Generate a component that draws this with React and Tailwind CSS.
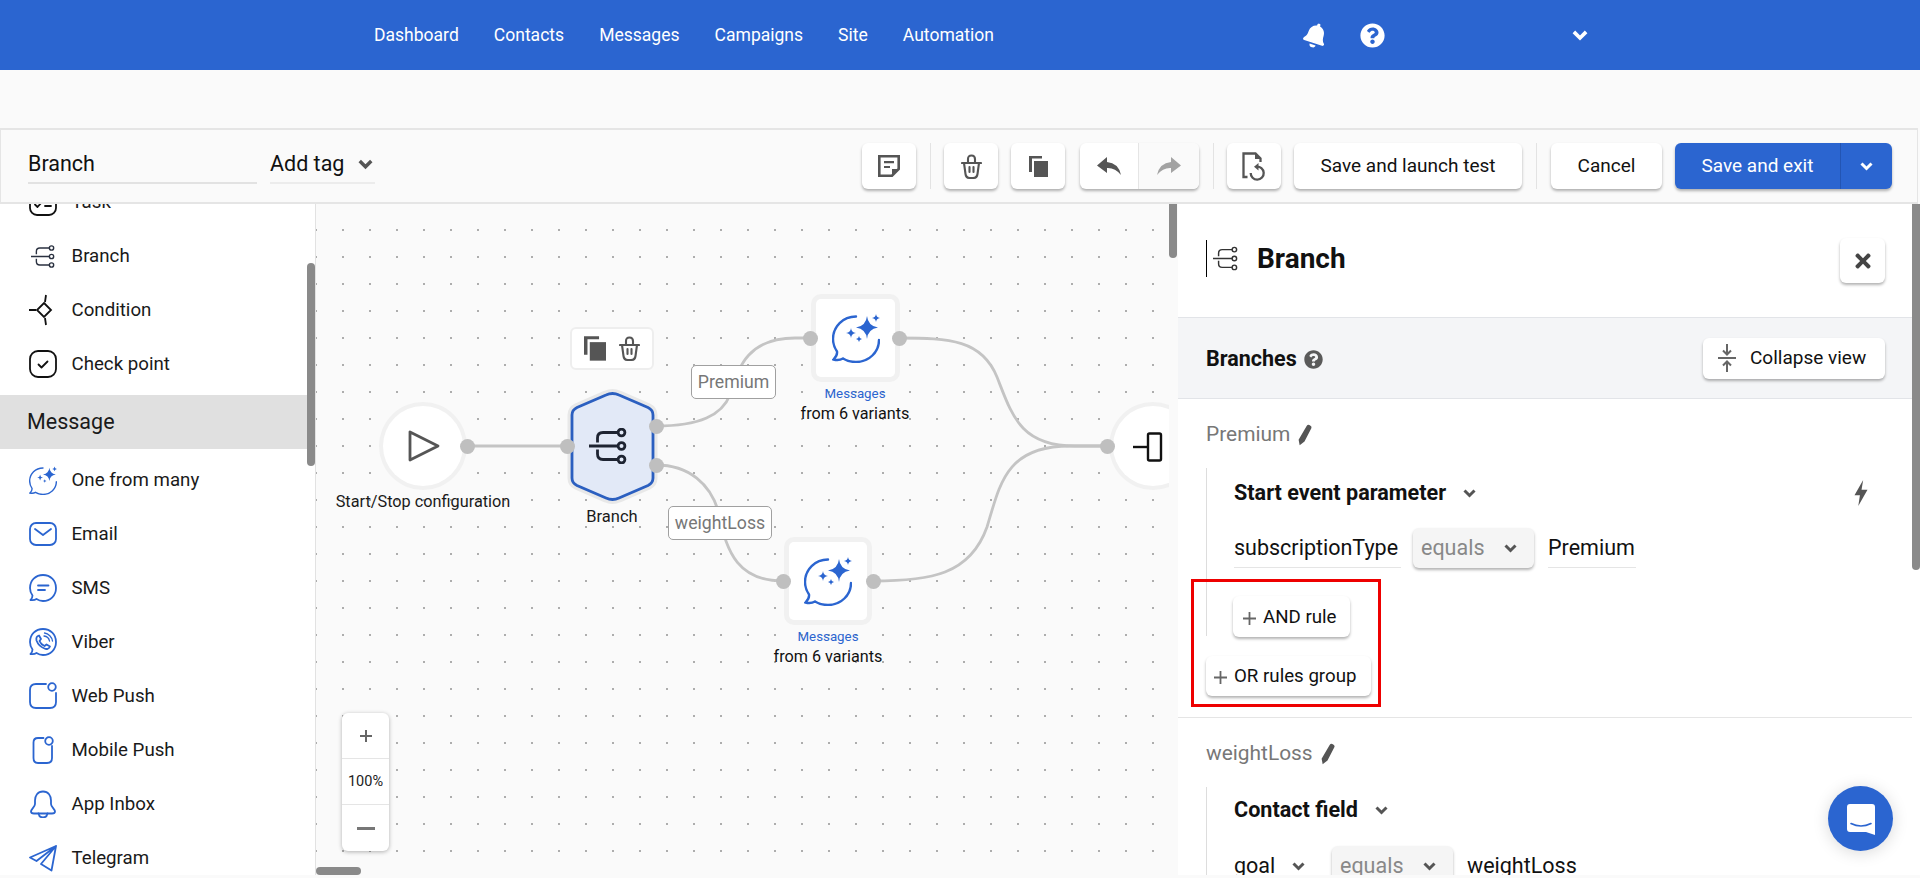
import { FaBell, FaQuestionCircle, FaTimes } from 'react-icons/fa'

const navItems = ['Dashboard', 'Contacts', 'Messages', 'Campaigns', 'Site', 'Automation']

const Chevron = ({ className = 'w-[13px] h-[9px] text-[#555]' }) => (
  <svg viewBox="0 0 13 9" className={className} fill="none" stroke="currentColor" strokeWidth="3">
    <path d="M1.5 1.5 6.5 6.5 11.5 1.5" />
  </svg>
)

const Plus = () => (
  <svg viewBox="0 0 13 13" className="w-[13px] h-[13px] mt-[2px]" fill="none" stroke="#666" strokeWidth="1.800">
    <path d="M6.500 0V13M0 6.500H13" />
  </svg>
)

const BranchGlyph = ({ className, color = '#2a3140', width = 2.2 }) => (
  <svg viewBox="0 0 38 36" className={className} fill="none" stroke={color} strokeWidth={width}>
    <circle cx="32.5" cy="4.5" r="3.4" />
    <circle cx="32.5" cy="18" r="3.4" />
    <circle cx="32.5" cy="31.5" r="3.4" />
    <path d="M0 18H29M29 4.5H14Q8.5 4.5 8.5 10V14.5M8.5 21.5V26Q8.5 31.5 14 31.5H29" />
  </svg>
)

const SparkBubble = ({ className }) => (
  <svg viewBox="0 0 48 50" className={className} fill="none" stroke="#2b65d0" strokeWidth="2.4" strokeLinecap="round">
    <path d="M24 3.5C11 3.5 1 13.5 1 26C1 31 2.5 35 5 38.5C5.5 41.5 4 44 1.5 46.5C5 47.5 8.5 47 11 45.5C15 48 19.500 49 24 49C37 49 47 39 47 27" />
    <g fill="#2b65d0" stroke="none">
      <path d="M35 3Q36 13 46 14.500Q36 16 35 26Q34 16 24 14.500Q34 13 35 3Z" />
      <path d="M44 1Q44.400 4.600 48 5Q44.400 5.400 44 9Q43.600 5.400 40 5Q43.600 4.600 44 1Z" />
      <path d="M19 15Q19.400 19.600 24 20Q19.400 20.400 19 25Q18.600 20.400 14 20Q18.600 19.600 19 15Z" />
      <path d="M27 23Q27.300 25.700 30 26Q27.300 26.300 27 29Q26.700 26.300 24 26Q26.700 25.700 27 23Z" />
    </g>
  </svg>
)

const Outline = ({ children, color = '#2b65d0' }) => (
  <svg viewBox="0 0 28 28" className="w-[28px] h-[28px]" fill="none" stroke={color} strokeWidth="1.8" strokeLinecap="round" strokeLinejoin="round">
    {children}
  </svg>
)

const sideIcons = {
  task: (
    <Outline color="#111">
      <rect x="1" y="1" width="26" height="26" rx="7" />
      <path d="M6 16.500 8.500 19 13 14M16 18H22" />
    </Outline>
  ),
  branch: <BranchGlyph className="w-[24px] h-[23px] ml-[2px]" />,
  condition: (
    <svg viewBox="0 0 28 32" className="w-[28px] h-[32px]" fill="none" stroke="#111" strokeWidth="1.800">
      <path d="M15 9 22 16 15 23 8 16ZM0 16H7M17 1 16 8M16 24 17 31" />
    </svg>
  ),
  check: (
    <Outline color="#111">
      <rect x="1" y="1" width="26" height="26" rx="8" />
      <path d="M9.500 14.500 12.500 17.500 18.500 11.500" />
    </Outline>
  ),
  spark: <SparkBubble className="w-[28px] h-[29px]" />,
  email: (
    <Outline>
      <rect x="1" y="3" width="26" height="22" rx="6" />
      <path d="M6 9 14 15 22 9" />
    </Outline>
  ),
  sms: (
    <Outline>
      <path d="M14 1C6.500 1 1 6.500 1 14C1 17 2 19.500 3.500 21.500C3.500 23.500 2.500 25 1.500 26C4 26.500 6 26 7.500 25C9.500 26.300 11.700 27 14 27C21.500 27 27 21.500 27 14C27 6.500 21.500 1 14 1Z" />
      <path d="M9 11.500H19.500M9 16H16" />
    </Outline>
  ),
  viber: (
    <Outline>
      <path d="M14 1C6.500 1 1 6.500 1 14C1 17 2 19.500 3.500 21.500C3.500 23.500 2.500 25 1.500 26C4 26.500 6 26 7.500 25C9.500 26.300 11.700 27 14 27C21.500 27 27 21.500 27 14C27 6.500 21.500 1 14 1Z" />
      <path d="M10 7.500 12 11 10.500 13C11.500 15.500 13 17 15.500 18L17.500 16.500 21 18.500C20 21 17.500 21.500 15.500 20.500C11.500 19 9 16.500 7.500 12.500C7 10 8 8 10 7.500Z" />
      <path d="M15 8C18 8.300 20 10.300 20.500 13M15.500 5C19.500 5.500 23 9 23.500 13" strokeWidth="1.300" />
    </Outline>
  ),
  web: (
    <Outline>
      <path d="M17 2H7Q1 2 1 8V20Q1 26 7 26H21Q27 26 27 20V11" />
      <circle cx="23" cy="5" r="3.800" />
    </Outline>
  ),
  mobile: (
    <Outline>
      <path d="M14.500 2H9Q4.500 2 4.500 6.500V22Q4.500 27 9 27H18Q23 27 23 22V10" />
      <circle cx="20" cy="5" r="3.800" />
    </Outline>
  ),
  inbox: (
    <Outline>
      <path d="M14 1.500C8.500 1.500 6 6 6 10.500V14C6 17 2 19 2 21.500C2 23 3 23.500 5 23.500H23C25 23.500 26 23 26 21.500C26 19 22 17 22 14V10.500C22 6 19.500 1.500 14 1.500Z" />
      <path d="M9.500 23.500C10 26 12 27.500 14 27.500C16 27.500 18 26 18.500 23.500" />
    </Outline>
  ),
  telegram: (
    <Outline>
      <path d="M1 13.500 27 2 22.500 26.500 12 20 27 2 7.500 17Z" />
    </Outline>
  ),
}

const topItems = [
  ['task', 'Task'],
  ['branch', 'Branch'],
  ['condition', 'Condition'],
  ['check', 'Check point'],
]

const messageItems = [
  ['spark', 'One from many'],
  ['email', 'Email'],
  ['sms', 'SMS'],
  ['viber', 'Viber'],
  ['web', 'Web Push'],
  ['mobile', 'Mobile Push'],
  ['inbox', 'App Inbox'],
  ['telegram', 'Telegram'],
]

const SideRow = ({ icon, label }) => (
  <div className="flex items-center h-[54px] pl-[29px] shrink-0">
    <div className="w-[42.5px] flex items-center">{sideIcons[icon]}</div>
    <span className="text-[18.7px] text-[#1a1a1a]">{label}</span>
  </div>
)

const TrashIcon = ({ className }) => (
  <svg viewBox="0 0 21 25" className={className} fill="none" stroke="#555" strokeWidth="2.100" strokeLinecap="round" strokeLinejoin="round">
    <path d="M1 9H20M7 8V5Q7 1.500 10.500 1.500Q14 1.500 14 5V8M3 9 4.500 20Q5 24 9 24H12Q16 24 16.500 20L18 9M8.500 13V18M12.500 13V18" />
  </svg>
)

const CopyIcon = ({ className }) => (
  <svg viewBox="0 0 19 21" className={className} fill="#555">
    <path d="M0 0H13V2.500H3V16H0Z" />
    <rect x="5" y="5" width="14" height="16" />
  </svg>
)

const ReplyIcon = ({ className, color }) => (
  <svg viewBox="0 0 24 18" className={className} fill={color}>
    <path d="M10 0 0 8.500 10 16V11Q18 10.500 24 18Q21.500 6 10 5Z" />
  </svg>
)

const toolBtn = 'h-[46px] bg-white rounded-[6px] shadow-[0_2px_3px_rgba(0,0,0,0.3)] flex items-center justify-center'

const Divider = () => <div className="w-px h-[46px] bg-[#e3e3e3] ml-[14px] mr-[13px]" />

const Toolbar = () => (
  <div className="h-[76px] w-[1918px] bg-[#fafafa] border-2 border-[#e5e5e5] border-r border-l flex items-center pl-[27px] pr-[25px] shrink-0">
    <div className="w-[229px] h-[38px] border-b-2 border-[#e2e2e2] text-[21.5px] text-[#111] leading-[36px] -mt-[2px]">Branch</div>
    <div className="ml-[13px] w-[105px] h-[38px] border-b-2 border-[#ececec] flex items-center justify-between pr-[2px] -mt-[2px]">
      <span className="text-[21.5px] text-[#111] leading-[36px]">Add tag</span>
      <Chevron className="w-[15px] h-[11px] text-[#555]" />
    </div>
    <div className={`${toolBtn} w-[54px] ml-auto`}>
      <svg viewBox="0 0 22 22" className="w-[22px] h-[22px]" fill="none" stroke="#555" strokeWidth="2.600">
        <path d="M1.300 1.300H20.700V14L14 20.700H1.300Z" />
        <path d="M6 7.200H16M6 12H12" strokeWidth="2.200" />
        <path d="M14 14H21L14 21Z" fill="#555" stroke="none" />
      </svg>
    </div>
    <Divider />
    <div className={`${toolBtn} w-[54px]`}>
      <TrashIcon className="w-[21px] h-[25px]" />
    </div>
    <div className={`${toolBtn} w-[54px] ml-[13px]`}>
      <CopyIcon className="w-[19px] h-[21px]" />
    </div>
    <div className={`${toolBtn} w-[119px] ml-[15px]`}>
      <div className="w-[59px] h-full flex items-center justify-center border-r border-[#e5e5e5]">
        <ReplyIcon className="w-[24px] h-[18px]" color="#555" />
      </div>
      <div className="w-[60px] h-full flex items-center justify-center rounded-r-[6px] bg-[#fafafa]">
        <ReplyIcon className="w-[24px] h-[18px] -scale-x-100" color="#a3a3a3" />
      </div>
    </div>
    <Divider />
    <div className={`${toolBtn} w-[54px]`}>
      <svg viewBox="0 0 24 29" className="w-[24px] h-[29px]" fill="none" stroke="#555" strokeWidth="2.300">
        <path d="M5.500 25H1.500V1.500H13.500L18.500 6.500V10" />
        <path d="M13 1V7H19Z" fill="#555" stroke="none" />
        <path d="M14.500 14.700A6.500 6.500 0 1 1 8.700 21" />
        <path d="M16.500 11 12 14.700 16.500 18.500Z" fill="#555" stroke="none" />
      </svg>
    </div>
    <div className={`${toolBtn} w-[228px] ml-[13px] text-[19px] text-[#111]`}>Save and launch test</div>
    <div className="w-px h-[46px] bg-[#e3e3e3] mx-[14px]" />
    <div className={`${toolBtn} w-[111px] text-[19px] text-[#111]`}>Cancel</div>
    <div className="h-[46px] w-[217px] ml-[13px] bg-[#2b65d0] rounded-[6px] shadow-[0_2px_3px_rgba(0,0,0,0.3)] flex items-center text-white">
      <div className="w-[166px] h-full flex items-center justify-center text-[19px] border-r border-[#2355b3]">Save and exit</div>
      <div className="flex-1 flex items-center justify-center">
        <Chevron className="w-[13px] h-[9px] text-white" />
      </div>
    </div>
  </div>
)

const Canvas = () => (
  <div className="relative w-[862px] h-full overflow-hidden bg-[#fafafa] bg-[radial-gradient(circle_at_1px_1px,#adadad_1px,transparent_1px)] bg-[size:27px_27px] bg-[position:-1px_-2px] shrink-0">
    <div className="absolute left-0 top-0 w-[853px] h-full overflow-hidden">
      <svg viewBox="316 204 853 671" className="absolute left-0 top-0 w-[853px] h-[671px]" fill="none">
        <g stroke="#c4c4c4" strokeWidth="2.800">
          <path d="M467 446H567" />
          <path d="M656 426C700 426 722 415 730 395C738 365 750 338 795 338H810" />
          <path d="M656 465C690 465 710 485 718 510C726 555 740 581 783 581" />
          <path d="M899 338C950 338 982 340 997 377C1012 415 1020 446 1075 446H1107" />
          <path d="M873 581C930 581 970 575 987 527C1000 485 1005 446 1070 446H1107" />
        </g>
        <path
          d="M606 395Q612.500 392 619 395L648 407.500Q653 410 653 415V478Q653 483 648 485.500L619 498Q612.500 501 606 498L577 485.500Q572 483 572 478V415Q572 410 577 407.500Z"
          fill="#e2e9f7"
          stroke="#e8e8e8"
          strokeWidth="9"
        />
        <path
          d="M606 395Q612.500 392 619 395L648 407.500Q653 410 653 415V478Q653 483 648 485.500L619 498Q612.500 501 606 498L577 485.500Q572 483 572 478V415Q572 410 577 407.500Z"
          fill="#e2e9f7"
          stroke="#2b5fc0"
          strokeWidth="2.800"
        />
      </svg>

      {/* start node */}
      <div className="absolute left-[67px] top-[202px] w-[80px] h-[80px] rounded-full bg-white ring-[4px] ring-[#f1f1f1] flex items-center justify-center">
        <svg viewBox="0 0 32 32" className="w-[32px] h-[32px] ml-[1px]" fill="none" stroke="#555" strokeWidth="2.800" strokeLinejoin="round">
          <path d="M2 2V30L30 16Z" />
        </svg>
      </div>
      <div className="absolute left-[7px] top-[287px] w-[200px] text-center text-[16.3px] leading-[22px] text-[#1a1a1a]">Start/Stop configuration</div>

      {/* branch node */}
      <div className="absolute left-[254px] top-[123px] w-[84px] h-[43px] bg-white border-2 border-[#eeeeee] rounded-[6px] flex items-center justify-center gap-[13px]">
        <CopyIcon className="w-[22px] h-[25px]" />
        <TrashIcon className="w-[21px] h-[25px]" />
      </div>
      <BranchGlyph className="absolute left-[272px] top-[224px] w-[38px] h-[36px] translate-x-[1px]" color="#1e2432" width={2.8} />
      <div className="absolute left-[256px] top-[302px] w-[80px] text-center text-[16.5px] leading-[22px] text-[#1a1a1a]">Branch</div>

      {/* edge labels */}
      <div className="absolute left-[375px] top-[161px] w-[85px] h-[34px] bg-white border-[1.5px] border-[#a0a0a0] rounded-[5px] flex items-center justify-center text-[17.7px] text-[#777]">Premium</div>
      <div className="absolute left-[352px] top-[302px] w-[104px] h-[34px] bg-white border-[1.5px] border-[#a0a0a0] rounded-[5px] flex items-center justify-center text-[17.7px] text-[#777]">weightLoss</div>

      {/* message nodes */}
      <div className="absolute left-[500px] top-[95px] w-[79px] h-[78px] bg-white rounded-[5px] ring-[5px] ring-[#f1f1f1] flex items-center justify-center">
        <SparkBubble className="w-[48px] h-[50px]" />
      </div>
      <div className="absolute left-[459px] top-[180px] w-[160px] text-center text-[13.3px] leading-[20px] text-[#2b65d0]">Messages</div>
      <div className="absolute left-[459px] top-[199px] w-[160px] text-center text-[16.2px] leading-[22px] text-[#111]">from 6 variants</div>

      <div className="absolute left-[473px] top-[338px] w-[78px] h-[78px] bg-white rounded-[5px] ring-[5px] ring-[#f1f1f1] flex items-center justify-center">
        <SparkBubble className="w-[48px] h-[50px]" />
      </div>
      <div className="absolute left-[432px] top-[423px] w-[160px] text-center text-[13.3px] leading-[20px] text-[#2b65d0]">Messages</div>
      <div className="absolute left-[432px] top-[442px] w-[160px] text-center text-[16.2px] leading-[22px] text-[#111]">from 6 variants</div>

      {/* end node */}
      <div className="absolute left-[797px] top-[202px] w-[80px] h-[80px] rounded-full bg-white ring-[4px] ring-[#f1f1f1]">
        <svg viewBox="0 0 30 30" className="absolute left-[20px] top-[26px] w-[30px] h-[30px]" fill="none" stroke="#111" strokeWidth="2.400" strokeLinejoin="round">
          <path d="M0 15H15" />
          <rect x="15" y="1.500" width="13" height="27" rx="1.500" />
        </svg>
      </div>

      {/* ports */}
      <div className="absolute left-[144px] top-[235px] w-[15px] h-[15px] rounded-full bg-[#bfbfbf]" />
      <div className="absolute left-[244px] top-[235px] w-[15px] h-[15px] rounded-full bg-[#bfbfbf]" />
      <div className="absolute left-[333px] top-[215px] w-[15px] h-[15px] rounded-full bg-[#bfbfbf]" />
      <div className="absolute left-[333px] top-[254px] w-[15px] h-[15px] rounded-full bg-[#bfbfbf]" />
      <div className="absolute left-[487px] top-[127px] w-[15px] h-[15px] rounded-full bg-[#bfbfbf]" />
      <div className="absolute left-[576px] top-[127px] w-[15px] h-[15px] rounded-full bg-[#bfbfbf]" />
      <div className="absolute left-[460px] top-[370px] w-[15px] h-[15px] rounded-full bg-[#bfbfbf]" />
      <div className="absolute left-[550px] top-[370px] w-[15px] h-[15px] rounded-full bg-[#bfbfbf]" />
      <div className="absolute left-[784px] top-[235px] w-[15px] h-[15px] rounded-full bg-[#bfbfbf]" />
    </div>

    {/* zoom control */}
    <div className="absolute left-[26px] top-[509px] w-[47px] h-[138px] bg-white rounded-[6px] shadow-[0_1px_4px_rgba(0,0,0,0.3)] flex flex-col">
      <div className="h-[46px] flex items-center justify-center border-b border-[#e5e5e5] text-[#666]">
        <svg viewBox="0 0 12 12" className="w-[12px] h-[12px]" fill="none" stroke="currentColor" strokeWidth="2">
          <path d="M6 0V12M0 6H12" />
        </svg>
      </div>
      <div className="h-[46px] flex items-center justify-center border-b border-[#e5e5e5] text-[14.5px] text-[#222]">100%</div>
      <div className="h-[46px] flex items-center justify-center">
        <div className="w-[18px] h-[3px] bg-[#777]" />
      </div>
    </div>

    {/* scrollbars */}
    <div className="absolute left-0 top-[663px] w-[45px] h-[8px] rounded-full bg-[#8a8a8a]" />
    <div className="absolute left-[853px] top-0 w-[8px] h-[54px] rounded-b-full bg-[#8a8a8a]" />
  </div>
)

const Pencil = () => (
  <svg viewBox="0 0 14 20" className="w-[15px] h-[24px] -ml-[3px]" fill="#555">
    <path d="M9 1.500Q10 0 12 .8Q14 1.600 13.500 3.500L7 16 2.500 19.500 1.500 14.500Z" />
  </svg>
)

const Underlined = ({ children, className = '' }) => (
  <div className={`h-[40px] border-b border-[#e5e5e5] text-[21.5px] text-[#111] leading-[40px] ${className}`}>{children}</div>
)

const EqualsSelect = () => (
  <div className="w-[121px] h-[40px] bg-[#f5f5f5] rounded-[6px] shadow-[0_2px_3px_rgba(0,0,0,0.3)] flex items-center justify-between pl-[8px] pr-[17px] text-[21.5px] text-[#888]">
    <span>equals</span>
    <Chevron />
  </div>
)

const panelBtn = 'bg-white rounded-[6px] shadow-[0_2px_3px_rgba(0,0,0,0.3)] flex items-center text-[18.7px] text-[#111]'

const Panel = () => (
  <div className="relative flex-1 h-full bg-white overflow-hidden">
    <div className="w-[734px]">
      <div className="h-[113px] flex items-center pl-[28px] pr-[27px]">
        <div className="h-[37px] pl-[6px] border-l border-black flex items-center -mt-[4px]">
          <BranchGlyph className="w-[25px] h-[25px]" color="#333" />
        </div>
        <span className="ml-[19px] text-[28px] font-bold text-[#111] -mt-[4px]">Branch</span>
        <div className="ml-auto w-[45px] h-[45px] bg-white rounded-[6px] shadow-[0_2px_3px_rgba(0,0,0,0.3)] flex items-center justify-center">
          <FaTimes className="w-[22px] h-[22px] text-[#444]" />
        </div>
      </div>
      <div className="h-[82px] bg-[#f4f5f7] border-y border-[#e2e4e8] flex items-center pl-[28px] pr-[27px]">
        <span className="text-[21.5px] font-bold text-[#111] mt-[3px]">Branches</span>
        <FaQuestionCircle className="ml-[7px] w-[19px] h-[19px] mt-[2px] text-[#5a5a5a]" />
        <div className={`${panelBtn} ml-auto w-[182px] h-[41px] pl-[15px] gap-[14px] text-[19px]`}>
          <svg viewBox="0 0 18 28" className="w-[18px] h-[28px]" fill="none" stroke="#666" strokeWidth="2">
            <path d="M9 0V10M5 6.500 9 10.500 13 6.500M0 14H18M9 28V18M5 21.500 9 17.500 13 21.500" />
          </svg>
          <span>Collapse view</span>
        </div>
      </div>

      <div className="pt-[25px] pb-[21px] pl-[28px] border-b border-[#e5e5e5]">
        <div className="flex items-center h-[22px] gap-[10px] text-[20.9px] text-[#777]">
          <span>Premium</span>
          <Pencil />
        </div>
        <div className="mt-[22px] h-[168px] pl-[27px] border-l border-[#ddd] pr-[44px]">
          <div className="h-[50px] flex items-center">
            <span className="text-[21.6px] font-bold text-[#111]">Start event parameter</span>
            <Chevron className="ml-[17px] w-[13px] h-[9px] text-[#555]" />
            <svg viewBox="0 0 12 24" className="ml-auto w-[14px] h-[26px]" fill="#555">
              <path d="M8 0 0 14H5L3.500 24 12 9H6.500Z" />
            </svg>
          </div>
          <div className="mt-[10px] flex items-start gap-[12px]">
            <Underlined className="w-[167px]">subscriptionType</Underlined>
            <EqualsSelect />
            <Underlined className="w-[88px] ml-[2px]">Premium</Underlined>
          </div>
          <div className={`${panelBtn} mt-[28px] -ml-[1px] w-[117px] h-[41px] pl-[10px] pt-[1px] gap-[7px]`}>
            <Plus />
            <span>AND rule</span>
          </div>
        </div>
        <div className={`${panelBtn} mt-[20px] w-[165px] h-[40px] pl-[8px] pt-[1px] gap-[7px]`}>
          <Plus />
          <span>OR rules group</span>
        </div>
      </div>

      <div className="pt-[25px] pl-[28px]">
        <div className="flex items-center h-[22px] gap-[10px] text-[20.9px] text-[#777]">
          <span>weightLoss</span>
          <Pencil />
        </div>
        <div className="mt-[22px] h-[100px] pl-[27px] border-l border-[#ddd]">
          <div className="h-[46px] flex items-center">
            <span className="text-[21.6px] font-bold text-[#111]">Contact field</span>
            <Chevron className="ml-[17px] w-[13px] h-[9px] text-[#555]" />
          </div>
          <div className="mt-[13px] flex items-start">
            <Underlined className="w-[77px] border-none flex items-center">
              <span>goal</span>
              <Chevron className="ml-[17px] w-[13px] h-[9px] text-[#555]" />
            </Underlined>
            <div className="ml-[21px]">
              <EqualsSelect />
            </div>
            <Underlined className="ml-[14px] w-[112px]">weightLoss</Underlined>
          </div>
        </div>
      </div>
    </div>

    {/* highlight box */}
    <div className="absolute left-[13px] top-[375px] w-[190px] h-[128px] border-[3px] border-[#ee0000]" />

    {/* scrollbar and chat launcher */}
    <div className="absolute right-0 top-0 w-[8px] h-[366px] rounded-b-full bg-[#8a8a8a]" />
    <div className="absolute left-[650px] top-[582px] w-[65px] h-[65px] rounded-full bg-[#2b65d0] shadow-[0_2px_16px_rgba(0,0,0,0.15)] flex items-center justify-center">
      <svg viewBox="0 0 28 31" className="w-[28px] h-[31px] mt-[2px]">
        <path d="M3 0H25Q28 0 28 3V31L19 28H3Q0 28 0 25V3Q0 0 3 0Z" fill="white" />
        <path d="M4 19.500Q14 24.500 24 19.500" fill="none" stroke="#2b65d0" strokeWidth="1.600" strokeLinecap="round" />
      </svg>
    </div>
  </div>
)

export default function App() {
  return (
    <div className="w-[1920px] h-[878px] overflow-hidden bg-[#fafafa] font-['Roboto',sans-serif] flex flex-col">
      <header className="h-[70px] bg-[#2b65d0] flex items-center shrink-0 text-white">
        <nav className="ml-[374px] flex gap-[35px] text-[17.55px] w-[913px]">
          {navItems.map(item => (
            <span key={item}>{item}</span>
          ))}
        </nav>
        <div className="ml-[16px]">
          <FaBell className="w-[25px] h-[25px] rotate-[18deg]" />
        </div>
        <FaQuestionCircle className="ml-[32px] w-[25px] h-[25px]" />
        <Chevron className="ml-[187px] w-[16px] h-[11px] text-white" />
      </header>
      <div className="h-[58px] shrink-0" />
      <Toolbar />
      <main className="h-[671px] flex shrink-0">
        <aside className="relative w-[316px] h-full bg-white border-r border-[#e2e2e2] overflow-hidden shrink-0">
          <div className="-mt-[29px] flex flex-col">
            {topItems.map(([icon, label]) => (
              <SideRow key={label} icon={icon} label={label} />
            ))}
            <div className="h-[54px] mt-[4px] mb-[4px] bg-[#e0e0e0] pl-[27px] flex items-center text-[21.5px] text-[#1a1a1a] shrink-0">Message</div>
            {messageItems.map(([icon, label]) => (
              <SideRow key={label} icon={icon} label={label} />
            ))}
          </div>
          <div className="absolute left-[307px] top-[59px] w-[8px] h-[203px] rounded-full bg-[#8a8a8a]" />
        </aside>
        <Canvas />
        <Panel />
      </main>
    </div>
  )
}
